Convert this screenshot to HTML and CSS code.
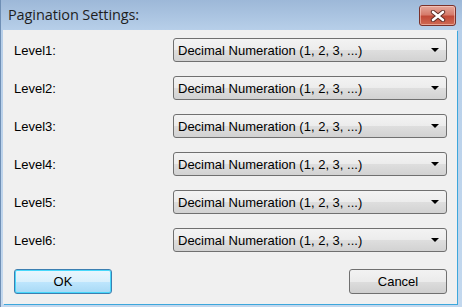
FILE: index.html
```html
<!DOCTYPE html>
<html lang="en">
<head>
    <meta charset="UTF-8">
    <title>Pagination Settings</title>
    <link rel="stylesheet" href="styles.css">
</head>
<body>
    <div class="window">
        <div class="titlebar">
            <span class="title">Pagination Settings:</span>
            <button class="close-btn" aria-label="Close">
                <svg width="16" height="12" viewBox="0 0 16 12">
                    <path d="M3 2 L13 10 M13 2 L3 10" stroke="#5b2a24" stroke-width="4.4" stroke-linecap="round"/>
                    <path d="M3 2 L13 10 M13 2 L3 10" stroke="#ffffff" stroke-width="2.6" stroke-linecap="round"/>
                </svg>
            </button>
        </div>

        <div class="client">
            <div class="levels">
                <label class="level-label">Level1:</label>
                <div class="combo"><span>Decimal Numeration (1, 2, 3, ...)</span><i class="arrow"></i></div>

                <label class="level-label">Level2:</label>
                <div class="combo"><span>Decimal Numeration (1, 2, 3, ...)</span><i class="arrow"></i></div>

                <label class="level-label">Level3:</label>
                <div class="combo"><span>Decimal Numeration (1, 2, 3, ...)</span><i class="arrow"></i></div>

                <label class="level-label">Level4:</label>
                <div class="combo"><span>Decimal Numeration (1, 2, 3, ...)</span><i class="arrow"></i></div>

                <label class="level-label">Level5:</label>
                <div class="combo"><span>Decimal Numeration (1, 2, 3, ...)</span><i class="arrow"></i></div>

                <label class="level-label">Level6:</label>
                <div class="combo"><span>Decimal Numeration (1, 2, 3, ...)</span><i class="arrow"></i></div>
            </div>

            <div class="actions">
                <button class="btn btn-default">OK</button>
                <button class="btn">Cancel</button>
            </div>
        </div>
    </div>
</body>
</html>
```

FILE: styles.css
```css
body {
    margin: 0;
    width: 462px;
    height: 307px;
    overflow: hidden;
    font-family: "Liberation Sans", Arial, sans-serif;
    font-size: 13px;
    color: #000;
}

.window {
    height: 307px;
    display: flex;
    flex-direction: column;
    background: linear-gradient(180deg, #9db8d8 0%, #b7cfe9 30px, #c3d8ee 100%);
    border-left: 1px solid #6f8fb5;
    box-sizing: border-box;
}

.titlebar {
    height: 30px;
    display: flex;
    align-items: flex-start;
    justify-content: space-between;
    padding: 0 6px 0 7px;
    box-sizing: border-box;
}

.title {
    font-family: "Open Sans", "Noto Sans", sans-serif;
    font-size: 14.5px;
    line-height: 30px;
    color: #1e1e1e;
    letter-spacing: -0.1px;
}

.close-btn {
    margin-top: 5px;
    width: 37px;
    height: 21px;
    padding: 0;
    border: 1px solid #7b322b;
    border-radius: 3px;
    background: linear-gradient(180deg, #e5a89c 0%, #d67c6c 45%, #c14a38 55%, #cf6a53 100%);
    box-shadow: inset 0 0 0 1px rgba(255, 220, 210, 0.5);
    display: flex;
    align-items: center;
    justify-content: center;
}

.client {
    flex: 1;
    margin: 0 5px 3px 2px;
    background: #f0f0f0;
    padding: 8px 9px 0 11px;
    box-shadow: 1px 1px 0 #3da7dc;
}

.levels {
    display: grid;
    grid-template-columns: 159px 274px;
    grid-auto-rows: 24px;
    row-gap: 14px;
    align-items: center;
}

.level-label {
    padding-top: 1px;
}

.combo {
    height: 24px;
    box-sizing: border-box;
    border: 1px solid #707070;
    border-radius: 3px;
    background: linear-gradient(180deg, #f3f3f3 0%, #ececec 50%, #dedede 51%, #d2d2d2 100%);
    display: flex;
    align-items: center;
    justify-content: space-between;
    padding: 0 6px 0 4px;
}

.arrow {
    width: 0;
    height: 0;
    border-left: 4px solid transparent;
    border-right: 4px solid transparent;
    border-top: 4px solid #000;
    margin-right: 1px;
}

.actions {
    display: flex;
    justify-content: space-between;
    margin-top: 17px;
    padding-right: 1px;
}

.btn {
    width: 98px;
    height: 25px;
    border: 1px solid #707070;
    border-radius: 3px;
    background: linear-gradient(180deg, #f2f2f2 0%, #ebebeb 50%, #dddddd 51%, #cfcfcf 100%);
    font-family: "Liberation Sans", Arial, sans-serif;
    font-size: 13px;
    color: #000;
    padding: 0;
}

.btn-default {
    border-color: #3c7fb1;
    background: linear-gradient(180deg, #eaf6fd 0%, #d9f0fc 50%, #bee6fd 51%, #a7d9f5 100%);
    box-shadow: inset 0 0 0 1px #48d8fb;
}
```
